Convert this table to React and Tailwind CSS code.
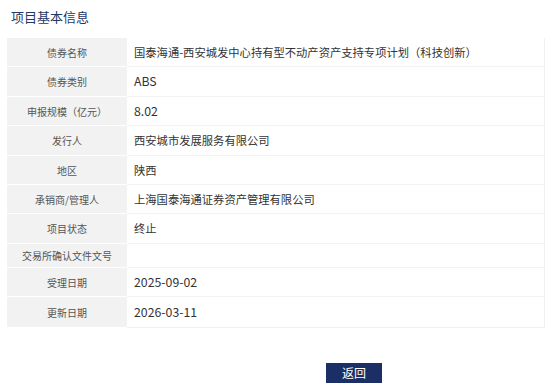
import React from 'react';

// 项目基本信息 detail page

const rows = [
  { label: '债券名称', value: '国泰海通-西安城发中心持有型不动产资产支持专项计划（科技创新）', h: 'h-[29px]' },
  { label: '债券类别', value: 'ABS', h: 'h-[30px]', latin: true },
  { label: '申报规模（亿元）', value: '8.02', h: 'h-[29px]', latin: true },
  { label: '发行人', value: '西安城市发展服务有限公司', h: 'h-[30px]' },
  { label: '地区', value: '陕西', h: 'h-[29px]' },
  { label: '承销商/管理人', value: '上海国泰海通证券资产管理有限公司', h: 'h-[29px]' },
  { label: '项目状态', value: '终止', h: 'h-[30px]' },
  { label: '交易所确认文件文号', value: '', h: 'h-[24px]' },
  { label: '受理日期', value: '2025-09-02', h: 'h-[29px]', latin: true },
  { label: '更新日期', value: '2026-03-11', h: 'h-[30px]', latin: true },
];

const InfoRow = ({ label, value, h, latin }) => (
  <div className={`flex ${h} border-b border-[#f3f3f3] last:border-b-0`}>
    <div className="w-[120px] shrink-0 flex items-center justify-center bg-[#f2f2f2] text-[10px] text-[#555] border-b border-white -mb-px">
      {label}
    </div>
    <div className={`flex-1 flex items-center pl-[7px] text-[#333] bg-white ${latin ? 'text-[12.3px]' : 'text-[11.3px]'}`}>
      {value}
    </div>
  </div>
);

export default function App() {
  return (
    <div
      className="w-[554px] h-[389px] bg-white overflow-hidden"
      style={{ fontFamily: '"Noto Sans CJK SC", "Noto Sans", sans-serif' }}
    >
      <div className="pl-[11px] pt-[7px] h-[38px]">
        <h2 className="text-[13px] leading-[20px] text-[#1f3865]">项目基本信息</h2>
      </div>
      <div className="ml-[7px] w-[538px] border border-[#f0f0f0] border-l-0 border-t-0">
        {rows.map((r) => (
          <InfoRow key={r.label} {...r} />
        ))}
      </div>
      <div className="pl-[326px] pt-[31px]">
        <button className="w-[56px] h-[20px] bg-[#1b2f66] text-white text-[12px] leading-[20px]">
          返回
        </button>
      </div>
    </div>
  );
}
